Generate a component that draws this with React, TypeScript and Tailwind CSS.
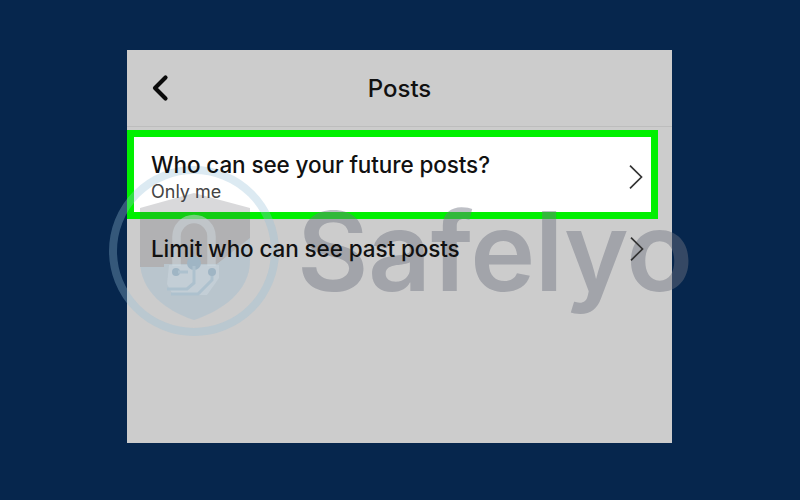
function Chevron() {
  return (
    <svg className="relative z-20 shrink-0" width="14" height="24" viewBox="0 0 14 24" fill="none">
      <path d="M1 0.7 L12.5 12 L1 23.3" stroke="#333" strokeWidth="1.7" />
    </svg>
  );
}

function Watermark() {
  return (
    <>
      <svg className="absolute z-10 left-[107px] top-[166px] pointer-events-none" width="174" height="172" viewBox="0 0 174 172" fill="none">
        <circle cx="87" cy="85" r="81" stroke="#96bed7" strokeOpacity="0.33" strokeWidth="8" />
        <path d="M87 27 L143 42 V72 L110 98 H57 V101 H33 V42 Z" fill="#50505a" fillOpacity="0.22" />
        <path d="M33 101 H57 V98 H110 L143 72 V95 C143 125 115 145 87 154 C59 145 33 125 33 95 Z" fill="#8fb6d2" fillOpacity="0.3" />
        <path d="M62 99 H112 V112 L100 129 H66 L60 118 Z" fill="#dce6ec" fillOpacity="0.3" />
        <path d="M69.5 100 V70.5 A17.5 17.5 0 0 1 104.5 70.5 V100" stroke="#cfd9e0" strokeOpacity="0.5" strokeWidth="8.5" />
        <circle cx="87" cy="97" r="7" fill="#9fb5c4" />
        <path d="M87 100 V117 L80 123 H60" stroke="#adc1ce" strokeWidth="3" />
        <circle cx="69" cy="106" r="4" fill="#9fb5c4" />
        <path d="M71 106 H81" stroke="#adc1ce" strokeWidth="3" />
        <path d="M105 106 V114 L91 128 H64" stroke="#adc1ce" strokeWidth="3" />
        <circle cx="105" cy="106" r="4" fill="#9fb5c4" />
      </svg>
      <span className="absolute z-10 left-[297px] top-[186px] text-[110px] leading-[130px] font-semibold text-[#6f7380]/45 tracking-[-0.5px] pointer-events-none">
        Safelyo
      </span>
    </>
  );
}

export default function App() {
  return (
    <div className="relative w-[800px] h-[500px] overflow-hidden bg-[#06264d] pt-[50px] pl-[127px] font-['Inter',sans-serif]">
      <div className="w-[545px] h-[393px] bg-[#cccccc] flex flex-col">
        <div className="h-[77px] shrink-0 border-b border-[#bdbdbd] flex items-center justify-between pl-[24px] pr-[521px]">
          <svg className="shrink-0" width="20" height="28" viewBox="0 0 20 28" fill="none">
            <path d="M14.5 3.5 L4 14 L14.5 24.5" stroke="#0a0a0a" strokeWidth="4.2" strokeLinecap="round" strokeLinejoin="round" />
          </svg>
        </div>
        <div className="-mt-[76px] h-[76px] flex items-center justify-center">
          <span className="text-[24px] font-medium text-[#111] leading-none">Posts</span>
        </div>
        <div className="mt-[3px] w-[531px] h-[89px] shrink-0 border-[7px] border-[#00f000] bg-white flex items-center justify-between pl-[17px] pr-[8px] pt-[4px]">
          <div className="flex flex-col">
            <span className="relative z-20 text-[22.5px] font-medium text-[#111] leading-[30px] tracking-[-0.1px]">Who can see your future posts?</span>
            <span className="relative z-20 text-[18px] text-[#444] leading-[24px]">Only me</span>
          </div>
          <Chevron />
        </div>
        <div className="h-[60px] shrink-0 flex items-center justify-between pl-[24px] pr-[28px]">
          <span className="relative z-20 text-[22.5px] font-medium text-[#111] tracking-[-0.1px]">Limit who can see past posts</span>
          <Chevron />
        </div>
      </div>
      <Watermark />
    </div>
  );
}
